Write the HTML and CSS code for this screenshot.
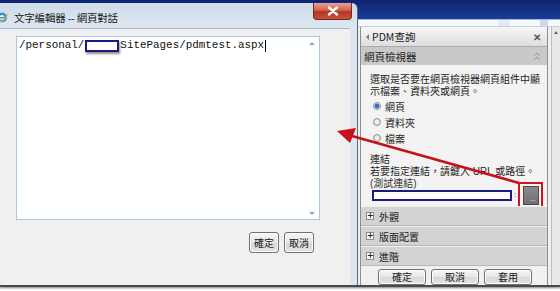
FILE: index.html
```html
<!DOCTYPE html>
<html lang="zh-Hant">
<head>
<meta charset="utf-8">
<title>文字編輯器 -- 網頁對話</title>
<link rel="stylesheet" href="styles.css">
</head>
<body>
<div class="shot">
  <div class="screen">
    <div class="dialog">
      <div class="titlebar">
        <div class="title-left">
          <svg class="app-icon" width="9" height="11" viewBox="0 0 9 11"><circle cx="2" cy="5.5" r="5" fill="#3b8fd9"/><circle cx="2" cy="5.5" r="2.4" fill="#e9f3fb"/><rect x="-1" y="5" width="6" height="1.4" fill="#3b8fd9"/><path d="M-2 9 Q3 11 8 2" stroke="#f0b030" stroke-width="1.3" fill="none"/></svg>
          <span class="title-text">文字編輯器 -- 網頁對話</span>
        </div>
        <div class="close-btn"><svg width="12" height="10" viewBox="0 0 12 10"><path d="M2 1.5 L10 8.5 M10 1.5 L2 8.5" stroke="#fff" stroke-width="2.4" stroke-linecap="round"/></svg></div>
      </div>
      <div class="client">
        <div class="editor">
          <div class="editor-text">/personal/<span class="redact"></span>SitePages/pdmtest.aspx<span class="caret"></span></div>
          <div class="editor-scroll">
            <span class="arr up"></span>
            <span class="arr down"></span>
          </div>
        </div>
        <div class="dlg-actions">
          <button class="btn dlg-btn">確定</button>
          <button class="btn dlg-btn">取消</button>
        </div>
      </div>
    </div>
    <div class="side">
      <div class="topband"></div>
      <div class="strip"><span class="strip-tab"></span><span class="strip-tab small"></span></div>
      <div class="side-main">
        <div class="pane">
          <div class="pane-title">
            <span class="pane-name"><span class="tri"></span>PDM查詢</span>
            <span class="pane-x">✕</span>
          </div>
          <div class="sec-head">
            <span>網頁檢視器</span>
            <svg class="chev" width="8" height="9" viewBox="0 0 8 9"><path d="M1 4 L4 1 L7 4 M1 8 L4 5 L7 8" stroke="#9a9a9a" stroke-width="1" fill="none"/></svg>
          </div>
          <div class="sec-body">
            <p class="desc">選取是否要在網頁檢視器網頁組件中顯示檔案、資料夾或網頁。</p>
            <div class="radios">
              <label class="radio-row"><span class="radio on"></span>網頁</label>
              <label class="radio-row"><span class="radio"></span>資料夾</label>
              <label class="radio-row"><span class="radio"></span>檔案</label>
            </div>
            <div class="link-label">連結</div>
            <div class="link-help">若要指定連結，請鍵入 URL 或路徑。</div>
            <div class="link-test">(測試連結)</div>
            <div class="link-row">
              <span class="link-input"></span>
              <span class="colon">:</span>
              <span class="browse-wrap"><span class="browse">...</span></span>
            </div>
          </div>
          <div class="cat"><span class="plus">+</span>外觀</div>
          <div class="cat"><span class="plus">+</span>版面配置</div>
          <div class="cat"><span class="plus">+</span>進階</div>
          <div class="pane-actions">
            <button class="btn pane-btn">確定</button>
            <button class="btn pane-btn">取消</button>
            <button class="btn pane-btn">套用</button>
          </div>
        </div>
        <div class="vscroll"><span class="vs-arrow"></span></div>
      </div>
    </div>
  </div>
  <svg class="annot" width="560" height="291" viewBox="0 0 560 291">
    <line x1="519" y1="183" x2="352" y2="136" stroke="#c8101a" stroke-width="2.6"/>
    <polygon points="337,131 356,128 350,143" fill="#c8101a"/>
  </svg>
</div>
</body>
</html>
```

FILE: styles.css
```css
* { box-sizing: border-box; }
html, body { margin: 0; padding: 0; }
body {
  width: 560px;
  height: 291px;
  background: #ffffff;
  font-family: "Noto Sans CJK TC", "Noto Sans", sans-serif;
  font-size: 10px;
  color: #1e1e1e;
  overflow: hidden;
}
.shot {
  position: relative;
  width: 560px;
  height: 291px;
}
.screen {
  display: flex;
  height: 287px;
  background: linear-gradient(#0d2370, #1b3f9a 20px, #d9e5f2 20px);
  border-bottom: 2px solid #4a4a4a;
  box-shadow: 0 1px 2px rgba(0,0,0,0.5);
}

/* ---------- dialog ---------- */
.dialog {
  width: 358px;
  margin-top: 3px;
  display: flex;
  flex-direction: column;
  background: linear-gradient(#cfdbe8, #dde7f1 25px);
  border-right: 1px solid #5d6a7a;
  border-top-right-radius: 6px;
}
.titlebar {
  height: 25px;
  display: flex;
  justify-content: space-between;
  align-items: flex-start;
}
.title-left {
  display: flex;
  align-items: center;
  height: 22px;
  margin-top: 3px;
}
.app-icon { margin-right: 5px; }
.title-text {
  font-size: 10.5px;
  color: #1a1a1a;
  letter-spacing: -0.2px;
}
.close-btn {
  width: 39px;
  height: 17px;
  margin-right: 5px;
  border: 1px solid #6b2a22;
  border-top: none;
  border-radius: 0 0 4px 4px;
  background: linear-gradient(#e7a596, #d2624d 45%, #b7321f 55%, #c9543b);
  display: flex;
  align-items: center;
  justify-content: center;
}
.client {
  flex: 1;
  margin-right: 7px;
  background: #f0f0f0;
  border-top: 1px solid #a5b5c8;
  padding: 7px 0 0 16px;
}
.editor {
  width: 304px;
  height: 184px;
  background: #ffffff;
  border: 1px solid #a8c7e3;
  display: flex;
  justify-content: space-between;
}
.editor-text {
  font-family: "Liberation Mono", monospace;
  font-size: 10.9px;
  line-height: 13px;
  color: #111;
  padding: 0 0 0 2px;
  display: flex;
  align-items: center;
  height: 15px;
  margin-top: 1px;
}
.redact {
  display: inline-block;
  width: 34px;
  height: 12px;
  margin: 0 1px 0 1px;
  border: 2px solid #1a1a80;
  background: #fff;
  box-shadow: 1px 2px 2px rgba(0,0,0,0.45);
}
.caret {
  display: inline-block;
  width: 1px;
  height: 12px;
  background: #000;
  margin-left: 1px;
}
.editor-scroll {
  width: 14px;
  display: flex;
  flex-direction: column;
  justify-content: space-between;
  align-items: center;
  padding: 5px 0 4px;
}
.arr {
  width: 0; height: 0;
  border-left: 3px solid transparent;
  border-right: 3px solid transparent;
}
.arr.up { border-bottom: 3px solid #a0a0a0; }
.arr.down { border-top: 3px solid #a0a0a0; }
.dlg-actions {
  display: flex;
  justify-content: flex-end;
  gap: 5px;
  width: 298px;
  margin-top: 12px;
}
.btn {
  font-family: "Noto Sans CJK TC", sans-serif;
  font-size: 10px;
  color: #1a1a1a;
  border: 1px solid #707070;
  border-radius: 3px;
  background: linear-gradient(#f6f6f6, #e6e6e6 50%, #d8d8d8 51%, #e3e3e3);
  padding: 0;
  line-height: 1;
  box-shadow: inset 0 0 0 1px #fbfbfb;
}
.dlg-btn {
  width: 30px;
  height: 21px;
}

/* ---------- side ---------- */
.side {
  flex: 1;
  display: flex;
  flex-direction: column;
}
.topband { height: 19px; }
.strip {
  height: 8px;
  background: #f6f9fc;
  border-top: 1px solid #9fb6d4;
  border-bottom: 1px solid #c2cfdd;
  display: flex;
  justify-content: flex-end;
  gap: 30px;
  padding-right: 12px;
}
.strip-tab {
  width: 12px;
  height: 6px;
  background: #e2ebf5;
}
.strip-tab.small { width: 8px; background: #c9dbef; }
.side-main {
  flex: 1;
  display: flex;
  padding-left: 2px;
  background: #f0f0f0;
}
.pane {
  width: 188px;
  display: flex;
  flex-direction: column;
  border-left: 1px solid #8d8d8d;
  border-right: 1px solid #8d8d8d;
  background: #f3f3f3;
}
.pane-title {
  height: 20px;
  flex: none;
  display: flex;
  justify-content: space-between;
  align-items: center;
  padding: 0 6px 0 5px;
  background: linear-gradient(#f7f7f7, #dedede);
  border-bottom: 1px solid #ababab;
  font-size: 10.5px;
}
.pane-name { display: flex; align-items: center; color: #222; }
.tri {
  width: 0; height: 0;
  border-top: 3px solid transparent;
  border-bottom: 3px solid transparent;
  border-right: 3px solid #7a7a7a;
  margin-right: 3px;
}
.pane-x { font-size: 10px; color: #555; font-weight: bold; }
.sec-head {
  height: 18px;
  flex: none;
  display: flex;
  justify-content: space-between;
  align-items: center;
  padding: 0 6px 0 3px;
  background: #c9c9c9;
  font-size: 10.5px;
  color: #222;
}
.sec-body {
  padding: 9px 4px 0 9px;
  height: 141px;
  flex: none;
  font-family: "Liberation Sans", "Noto Sans CJK TC", sans-serif;
}
.desc {
  margin: 0;
  line-height: 12px;
  font-size: 10px;
}
.radios {
  display: flex;
  flex-direction: column;
}
.radio-row {
  display: flex;
  align-items: center;
  height: 16px;
  font-size: 10px;
  padding-left: 3px;
}
.radio {
  width: 8px;
  height: 8px;
  border-radius: 50%;
  border: 1px solid #8e8f8f;
  background: radial-gradient(#f4f4f4, #d9d9d9);
  margin-right: 4px;
}
.radio.on {
  background: radial-gradient(circle, #2a6fc9 0 2px, #9cc3ea 2.5px, #eaf2fb 3px);
}
.link-label { margin-top: 8px; line-height: 12px; }
.link-help { line-height: 12px; }
.link-test { line-height: 11px; color: #333; }
.link-row {
  display: flex;
  align-items: center;
  height: 12px;
  margin-left: 2px;
}
.link-input {
  width: 141px;
  height: 11px;
  border: 2px solid #1a1a80;
  background: #fff;
}
.colon { width: 6px; text-align: center; font-size: 8px; line-height: 8px; color: #444; }
.browse-wrap {
  display: flex;
  align-items: center;
  justify-content: center;
  flex: none;
  width: 25px;
  height: 26px;
  border: 2px solid #d0141c;
}
.browse {
  width: 16px;
  height: 19px;
  background: linear-gradient(#8a8a8a, #707070);
  border: 1px solid #4a4a4a;
  color: #eee;
  font-size: 7px;
  display: flex;
  align-items: flex-end;
  justify-content: flex-end;
  padding: 0 2px 2px 0;
  line-height: 1;
}
.cat {
  height: 20px;
  flex: none;
  display: flex;
  align-items: center;
  background: #d3d3d3;
  border-top: 1px solid #f2f2f2;
  border-bottom: 1px solid #b8b8b8;
  padding-left: 5px;
  font-size: 10px;
  color: #222;
}
.plus {
  width: 8px;
  height: 8px;
  background: #fff;
  border: 1px solid #8a8a8a;
  font-size: 8px;
  line-height: 6px;
  text-align: center;
  margin-right: 5px;
  font-family: "DejaVu Sans", sans-serif;
  font-weight: bold;
}
.pane-actions {
  flex: 1;
  display: flex;
  gap: 5px;
  padding: 3px 0 0 17px;
  background: #f0f0f0;
}
.pane-btn {
  width: 48px;
  height: 16px;
}
.vscroll {
  flex: 1;
  background: #e9e9e9;
  border-left: 1px solid #bdbdbd;
  margin-left: 3px;
  display: flex;
  justify-content: center;
  padding-top: 4px;
}
.vs-arrow {
  width: 0; height: 0;
  border-left: 2px solid transparent;
  border-right: 2px solid transparent;
  border-bottom: 3px solid #606060;
}

/* ---------- annotation ---------- */
.annot {
  position: absolute;
  left: 0;
  top: 0;
  pointer-events: none;
}
```
